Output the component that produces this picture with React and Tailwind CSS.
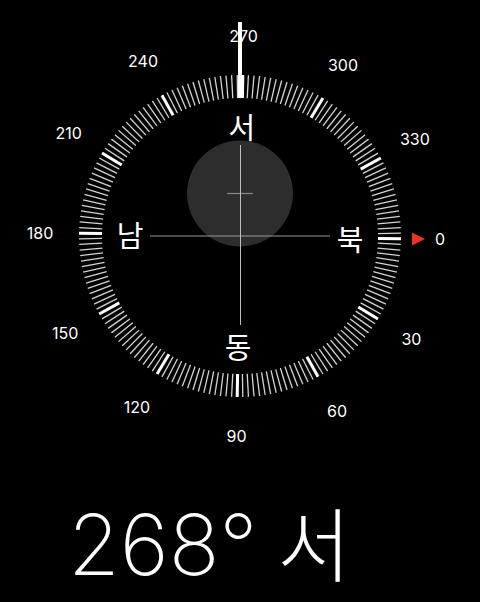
const CX = 240
const CY = 236
const HEADING = 269

const polar = (deg, r) => {
  const a = ((deg - HEADING) * Math.PI) / 180
  return [CX + r * Math.sin(a), CY - r * Math.cos(a)]
}

const ticks = Array.from({ length: 180 }, (_, i) => i * 2)
const numbers = [0, 30, 60, 90, 120, 150, 180, 210, 240, 270, 300, 330]
const cardinals = [
  { deg: 0, label: '북' },
  { deg: 90, label: '동' },
  { deg: 180, label: '남' },
  { deg: 270, label: '서' },
]

const Dial = () => (
  <svg width="480" height="470" viewBox="0 0 480 470" className="block">
    {/* ring ticks */}
    {ticks.map((d) => {
      const major = d % 30 === 0
      const [x1, y1] = polar(d, 161)
      const [x2, y2] = polar(d, 138)
      return (
        <line
          key={d}
          x1={x1}
          y1={y1}
          x2={x2}
          y2={y2}
          stroke={major ? '#ffffff' : '#d4d4d4'}
          strokeWidth={major ? 3 : 1.3}
        />
      )
    })}

    {/* degree labels */}
    {numbers.map((d) => {
      const [x, y] = polar(d, 200)
      return (
        <text
          key={d}
          x={x}
          y={y}
          fill="#fff"
          fontSize="16"
          fontFamily="Inter, 'Liberation Sans', sans-serif"
          textAnchor="middle"
          dominantBaseline="central"
        >
          {d}
        </text>
      )
    })}

    {/* north marker */}
    {(() => {
      const [x, y] = polar(0, 178)
      return <polygon points={`${x - 6},${y - 6.5} ${x + 7},${y} ${x - 6},${y + 6.5}`} fill="#eb3323" />
    })()}

    {/* cardinal letters */}
    {cardinals.map((c) => {
      const [x, y] = polar(c.deg, 110)
      return (
        <text
          key={c.deg}
          x={x}
          y={y}
          fill="#fff"
          fontSize="29"
          fontFamily="'Noto Sans CJK KR', sans-serif"
          textAnchor="middle"
          dominantBaseline="central"
        >
          {c.label}
        </text>
      )
    })}

    {/* level bubble */}
    <circle cx="240" cy="193.5" r="53" fill="#2d2d2d" />
    <line x1="227" y1="193.5" x2="253" y2="193.5" stroke="#8a8a8a" strokeWidth="1.2" />

    {/* crosshair */}
    <line x1="150" y1="236" x2="330" y2="236" stroke="#9a9a9a" strokeWidth="1" />
    <line x1="240.5" y1="145" x2="240.5" y2="325" stroke="#bdbdbd" strokeWidth="1" />

    {/* heading indicator */}
    <line x1="240" y1="22" x2="240" y2="98" stroke="#fff" strokeWidth="4" />
  </svg>
)

export default function App() {
  return (
    <div className="w-[480px] h-[602px] bg-black overflow-hidden flex flex-col">
      <Dial />
      <div className="flex items-baseline pl-[68px] pt-[30px] text-white leading-none">
        <span className="text-[84px] font-extralight font-['Inter','Liberation_Sans',sans-serif]">268°</span>
        <span className="ml-[20px] text-[80px] font-light font-['Noto_Sans_CJK_KR',sans-serif]">서</span>
      </div>
    </div>
  )
}
